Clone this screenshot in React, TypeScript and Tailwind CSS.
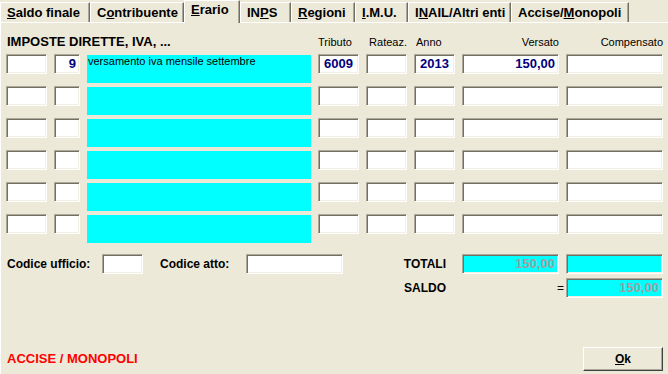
import React from "react";

const sunken =
  "h-[20px] shrink-0 bg-white border border-t-[#aca899] border-l-[#aca899] border-b-white border-r-white shadow-[inset_1px_1px_0_#716f64,inset_-1px_-1px_0_#f1efe2] text-[13px] font-bold leading-[18px] text-[#000080]";
const sunkenCyan =
  "h-[20px] shrink-0 bg-[#00ffff] border border-t-[#aca899] border-l-[#aca899] border-b-white border-r-white shadow-[inset_1px_1px_0_#716f64,inset_-1px_-1px_0_#f1efe2] text-[13px] font-bold leading-[18px] text-[#a0a0a0]";

function Tab({ w, children, active }: { w: string; children: React.ReactNode; active?: boolean }) {
  if (active) {
    return (
      <div
        className={`${w} h-[23px] mb-[-1px] relative z-10 bg-[#ece9d8] border-t border-l border-white border-r border-r-[#716f64] shadow-[inset_-1px_0_0_#aca899] pl-[6px] pt-[1px] text-[13px] font-bold leading-[15px] whitespace-nowrap`}
      >
        {children}
      </div>
    );
  }
  return (
    <div
      className={`${w} h-[20px] border-t border-l border-white border-r border-r-[#716f64] shadow-[inset_-1px_0_0_#aca899] pl-[6px] pt-[2px] text-[13px] font-bold leading-[15px] whitespace-nowrap`}
    >
      {children}
    </div>
  );
}

function Row({ a, b, desc, trib, anno, vers }: { a?: string; b?: string; desc?: string; trib?: string; anno?: string; vers?: string }) {
  return (
    <div className="flex gap-[7px] h-[29px] items-start">
      <div className={`${sunken} w-[41px] text-right pr-[3px]`}>{a}</div>
      <div className={`${sunken} w-[26px] text-right pr-[3px]`}>{b}</div>
      <div className="w-[224px] h-[28px] mt-[1px] bg-[#00ffff] text-[11px] leading-[13px] pl-[1px] text-black">{desc}</div>
      <div className={`${sunken} w-[41px] text-center`}>{trib}</div>
      <div className={`${sunken} w-[41px]`}></div>
      <div className={`${sunken} w-[41px] text-center`}>{anno}</div>
      <div className={`${sunken} w-[97px] text-right pr-[3px]`}>{vers}</div>
      <div className={`${sunken} w-[97px]`}></div>
    </div>
  );
}

export default function App() {
  return (
    <div className="w-[668px] h-[374px] bg-[#ece9d8] font-['Liberation_Sans',Arial,sans-serif] text-black overflow-hidden">
      <div className="flex h-[22px] items-end">
        <Tab w="w-[90px]">
          <u>S</u>aldo finale
        </Tab>
        <Tab w="w-[94px]">
          C<u>o</u>ntribuente
        </Tab>
        <Tab w="w-[56px]" active>
          <u>E</u>rario
        </Tab>
        <Tab w="w-[51px]">
          IN<u>P</u>S
        </Tab>
        <Tab w="w-[64px]">
          <u>R</u>egioni
        </Tab>
        <Tab w="w-[53px]">
          <u>I</u>.M.U.
        </Tab>
        <Tab w="w-[103px]">
          I<u>N</u>AIL/Altri enti
        </Tab>
        <Tab w="w-[118px]">
          Accise/<u>M</u>onopoli
        </Tab>
      </div>
      <div className="h-[352px] border-t border-l border-white px-[5px] pt-[11px]">
        <div className="flex gap-[7px] items-baseline h-[15px]">
          <div className="w-[305px] pl-[1px] text-[13px] font-bold leading-[15px]">IMPOSTE DIRETTE, IVA, ...</div>
          <div className="w-[41px] text-[11px]">Tributo</div>
          <div className="w-[41px] text-[11px] text-right">Rateaz.</div>
          <div className="w-[41px] text-[11px] pl-[2px]">Anno</div>
          <div className="w-[97px] text-[11px] text-right">Versato</div>
          <div className="w-[97px] text-[11px] text-right">Compensato</div>
        </div>
        <div className="mt-[5px] flex flex-col gap-[3px]">
          <Row b="9" desc="versamento iva mensile settembre" trib="6009" anno="2013" vers="150,00" />
          <Row />
          <Row />
          <Row />
          <Row />
          <Row />
        </div>
        <div className="mt-[11px] flex items-center h-[20px] text-[12px] font-bold leading-[14px]">
          <div className="w-[96px] pl-[1px]">Codice ufficio:</div>
          <div className={`${sunken} w-[41px]`}></div>
          <div className="w-[103px] pl-[17px]">Codice atto:</div>
          <div className={`${sunken} w-[97px]`}></div>
          <div className="w-[103px] text-right">TOTALI</div>
          <div className={`${sunkenCyan} w-[97px] ml-[16px] text-right pr-[3px]`}>150,00</div>
          <div className={`${sunkenCyan} w-[97px] ml-[7px]`}></div>
        </div>
        <div className="mt-[4px] flex items-center h-[20px] text-[12px] font-bold leading-[14px]">
          <div className="w-[440px] text-right">SALDO</div>
          <div className="w-[120px] text-right pr-[2px] font-normal">=</div>
          <div className={`${sunkenCyan} w-[97px] text-right pr-[3px]`}>150,00</div>
        </div>
        <div className="mt-[49px] flex justify-between items-end">
          <div className="pl-[1px] mb-[5px] text-[13px] font-bold leading-[15px] text-[#ff0000]">ACCISE / MONOPOLI</div>
          <div className="w-[80px] h-[24px] border border-t-white border-l-white border-b-[#404040] border-r-[#404040] shadow-[inset_-1px_-1px_0_#aca899] flex items-center justify-center text-[12px] font-bold leading-[14px]">
            <span>
              <u>O</u>k
            </span>
          </div>
        </div>
      </div>
    </div>
  );
}
